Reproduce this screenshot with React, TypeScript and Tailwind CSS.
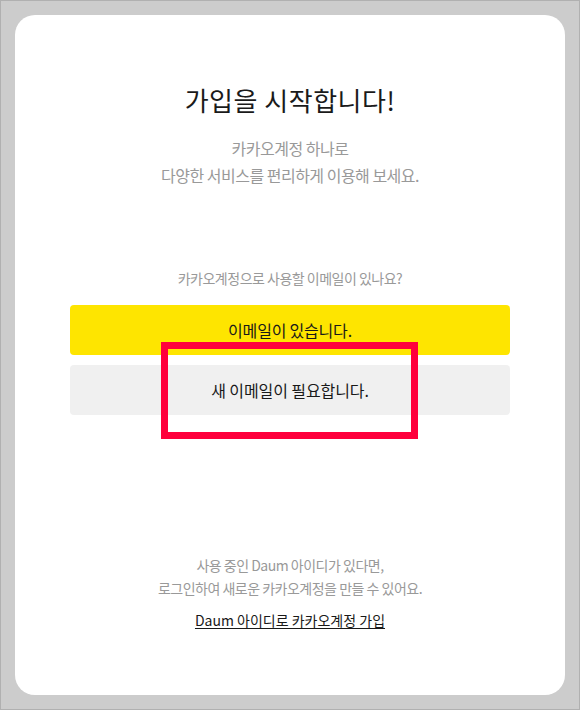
import React from "react";

export default function App() {
  const font = { fontFamily: '"Noto Sans CJK KR", "Noto Sans", sans-serif' };
  return (
    <div
      className="w-[580px] h-[710px] border border-[#b0b0b0] bg-[#cccccc] p-[14px]"
      style={font}
    >
      <div className="relative h-[680px] w-[550px] rounded-[20px] bg-white px-[55px] pt-[67px] flex flex-col items-center text-center">
        <h1 className="h-[36px] leading-[36px] text-[26px] tracking-[0.5px] text-[#1a1a1a] font-normal">
          가입을 시작합니다!
        </h1>
        <p className="mt-[16.5px] text-[16px] leading-[27px] tracking-[-0.5px] text-[#999999]">
          카카오계정 하나로
          <br />
          다양한 서비스를 편리하게 이용해 보세요.
        </p>
        <p className="mt-[79.5px] text-[14px] leading-[20px] tracking-[-0.5px] text-[#999999]">
          카카오계정으로 사용할 이메일이 있나요?
        </p>
        <button className="mt-[17px] h-[50px] w-full rounded-[4px] bg-[#fee500] text-[16px] tracking-[-0.2px] text-[#191919]">
          이메일이 있습니다.
        </button>
        <button className="mt-[10px] h-[50px] w-full rounded-[4px] bg-[#f0f0f0] text-[16px] tracking-[-0.1px] text-[#191919]">
          새 이메일이 필요합니다.
        </button>
        <p className="mt-[138.5px] text-[14px] leading-[23px] tracking-[-0.5px] text-[#999999]">
          사용 중인 Daum 아이디가 있다면,
          <br />
          로그인하여 새로운 카카오계정을 만들 수 있어요.
        </p>
        <a className="mt-[10.5px] text-[14px] leading-[20px] tracking-[0px] text-[#191919] underline underline-offset-2">
          Daum 아이디로 카카오계정 가입
        </a>
        <div className="absolute left-[146px] top-[327px] h-[97px] w-[257px] border-[7px] border-[#ff003c]" />
      </div>
    </div>
  );
}
